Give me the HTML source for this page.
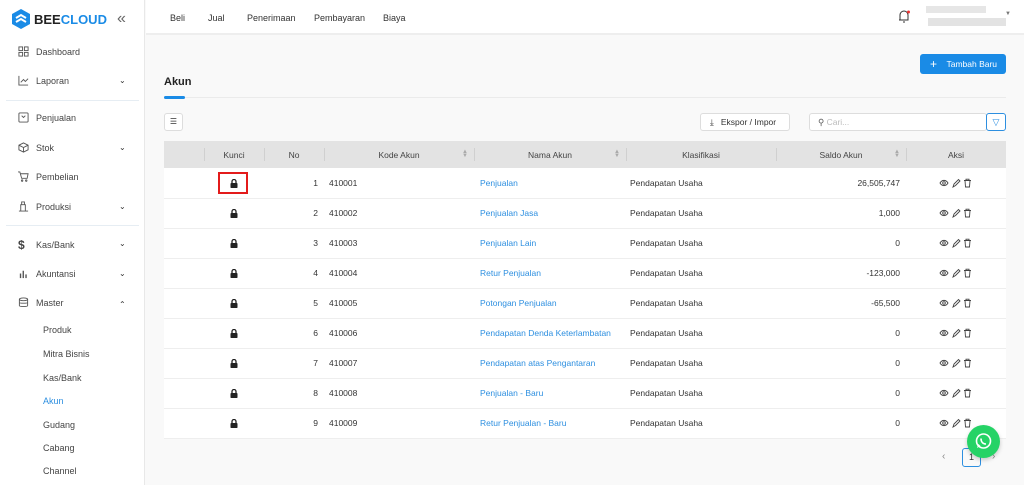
<!DOCTYPE html>
<html><head><meta charset="utf-8">
<style>
*{box-sizing:border-box;margin:0;padding:0}
body{width:1024px;height:485px;overflow:hidden;font-family:"Liberation Sans",sans-serif;font-size:9px;color:#333;background:#f9f9f9;position:relative}
.sb{position:absolute;left:0;top:0;width:145px;height:485px;background:#fff;border-right:1px solid #e8e8e8}
.logo{position:absolute;left:12px;top:9px;display:flex;align-items:center;font-weight:bold;font-size:13px;letter-spacing:0}
.mi{position:absolute;left:18px;display:flex;align-items:center;color:#444;font-size:9px}
.mi svg{width:11px;height:11px;margin-right:7px}
.chev{position:absolute;left:119px;font-size:8px;color:#333}
.sub{position:absolute;left:43px;color:#444;font-size:9px}
.hr{position:absolute;left:6px;width:133px;height:1px;background:#e6edf3}
.top{position:absolute;left:146px;top:0;width:878px;height:35px;background:#fff;border-bottom:2px solid #eee}
.top span{position:absolute;top:13px;font-size:9px;color:#333}
.btn{position:absolute;background:#fff;border:1px solid #ddd;border-radius:3px}
table{position:absolute;left:164px;top:141px;width:842px;border-collapse:collapse;background:#fff}
th{height:27px;background:#e3e3e3;font-weight:normal;font-size:8.5px;color:#444;position:relative}
td{height:30px;border-bottom:1px solid #eee;font-size:8.5px;color:#333}
th.s::before{content:"";position:absolute;left:0;top:7px;height:13px;width:1px;background:#d0d0d0}
.srt{position:absolute;right:6px;top:9px;color:#aaa;font-size:6px;line-height:4px}
a{color:#2d8fe0;text-decoration:none}
.ic{display:inline-block;vertical-align:middle}
</style></head><body>
<div class="sb">
 <div class="logo"><svg width="18" height="20" viewBox="0 0 18 20"><path d="M9 0L18 5V15L9 20L0 15V5Z" fill="#1a8be6"/><path d="M4 9L9 6L14 9M4 13L9 10L14 13" stroke="#fff" stroke-width="2" fill="none"/></svg><span style="margin-left:4px;color:#222">BEE</span><span style="color:#1a8be6">CLOUD</span><span style="margin-left:10px;color:#666;font-weight:normal;font-size:16px">«</span></div>
 <div class="mi" style="top:46px"><svg viewBox="0 0 12 12" fill="none" stroke="#555"><rect x="1" y="1" width="4" height="4"/><rect x="7" y="1" width="4" height="4"/><rect x="1" y="7" width="4" height="4"/><rect x="7" y="7" width="4" height="4"/></svg>Dashboard</div>
 <div class="mi" style="top:75px"><svg viewBox="0 0 12 12" fill="none" stroke="#555"><path d="M1 1V11H11M3 8L6 5L8 7L11 4"/></svg>Laporan</div><div class="chev" style="top:76px">&#8964;</div>
 <div class="hr" style="top:100px"></div>
 <div class="mi" style="top:112px"><svg viewBox="0 0 12 12" fill="none" stroke="#555"><rect x="1" y="1" width="10" height="10" rx="1"/><path d="M4 4L6 6L8 4"/></svg>Penjualan</div>
 <div class="mi" style="top:142px"><svg viewBox="0 0 12 12" fill="none" stroke="#555"><path d="M6 1L11 3.5V8.5L6 11L1 8.5V3.5ZM1 3.5L6 6L11 3.5M6 6V11"/></svg>Stok</div><div class="chev" style="top:143px">&#8964;</div>
 <div class="mi" style="top:171px"><svg viewBox="0 0 12 12" fill="none" stroke="#555"><path d="M0 1H2L4 8H10L11 3H3"/><circle cx="4.5" cy="10.5" r="0.8"/><circle cx="9" cy="10.5" r="0.8"/></svg>Pembelian</div>
 <div class="mi" style="top:201px"><svg viewBox="0 0 12 12" fill="none" stroke="#555"><path d="M1 11H11M3 11V4H8V11M4 4V1H7V4"/></svg>Produksi</div><div class="chev" style="top:202px">&#8964;</div>
 <div class="hr" style="top:225px"></div>
 <div class="mi" style="top:238px"><span style="width:11px;margin-right:7px;font-size:12px;font-weight:bold">$</span>Kas/Bank</div><div class="chev" style="top:239px">&#8964;</div>
 <div class="mi" style="top:268px"><svg viewBox="0 0 12 12" fill="#555"><rect x="2" y="6" width="1.5" height="5"/><rect x="5" y="3" width="1.5" height="8"/><rect x="8" y="7" width="1.5" height="4"/></svg>Akuntansi</div><div class="chev" style="top:269px">&#8964;</div>
 <div class="mi" style="top:297px"><svg viewBox="0 0 12 12" fill="none" stroke="#555"><ellipse cx="6" cy="2.5" rx="4.5" ry="1.5"/><path d="M1.5 2.5V9.5C1.5 10.5 10.5 10.5 10.5 9.5V2.5M1.5 6C1.5 7 10.5 7 10.5 6"/></svg>Master</div><div class="chev" style="top:300px">&#8963;</div>
 <div class="sub" style="top:325px">Produk</div>
 <div class="sub" style="top:349px">Mitra Bisnis</div>
 <div class="sub" style="top:373px">Kas/Bank</div>
 <div class="sub" style="top:396px;color:#2d8fe0">Akun</div>
 <div class="sub" style="top:420px">Gudang</div>
 <div class="sub" style="top:443px">Cabang</div>
 <div class="sub" style="top:466px">Channel</div>
</div>
<div class="top">
 <span style="left:24px">Beli</span><span style="left:62px">Jual</span><span style="left:101px">Penerimaan</span><span style="left:168px">Pembayaran</span><span style="left:237px">Biaya</span>
 <svg style="position:absolute;left:751px;top:9px" width="14" height="15" viewBox="0 0 14 15" fill="none" stroke="#333"><path d="M3 11V6A4 4 0 0 1 11 6V11H2M6 13H8"/><circle cx="11.5" cy="3" r="1.5" fill="#e33" stroke="none"/></svg>
 <div style="position:absolute;left:780px;top:6px;width:60px;height:7px;background:#e6e6e6"></div>
 <div style="position:absolute;left:782px;top:18px;width:78px;height:8px;background:#e3e3e3"></div>
 <span style="left:859px;top:11px;font-size:6px;color:#777">▼</span>
</div>
<div style="position:absolute;left:164px;top:76px;font-weight:bold;font-size:11px;color:#222">Akun</div>
<div style="position:absolute;left:164px;top:97px;width:842px;height:1px;background:#ebebeb"></div>
<div style="position:absolute;left:164px;top:96px;width:21px;height:3px;border-radius:2px;background:#1a8be6"></div>
<div style="position:absolute;left:920px;top:54px;width:86px;height:20px;background:#1a8be6;border-radius:3px;color:#fff;font-size:8.5px;line-height:20px;padding-left:10px"><span style="font-size:12px;vertical-align:-1px">+</span>&nbsp;&nbsp;&nbsp;&nbsp;Tambah Baru</div>
<div class="btn" style="left:164px;top:113px;width:19px;height:18px;text-align:center;line-height:16px;font-size:8px">☰</div>
<div class="btn" style="left:700px;top:113px;width:90px;height:18px;line-height:16px;padding-left:9px;font-size:8.5px">⤓&nbsp;&nbsp;&nbsp;Ekspor / Impor</div>
<div class="btn" style="left:809px;top:113px;width:178px;height:18px;line-height:16px;padding-left:8px;color:#bbb;font-size:8.5px"><span style="color:#555">&#9906;</span> Cari...</div>
<div class="btn" style="left:986px;top:113px;width:20px;height:18px;border-color:#2d8fe0;text-align:center;line-height:16px;color:#2d8fe0;font-size:9px">▽</div>
<table>
<tr><th style="width:40px"></th><th class="s" style="width:60px">Kunci</th><th class="s" style="width:60px">No</th><th class="s" style="width:150px">Kode Akun<span class="srt">▲<br>▼</span></th><th class="s" style="width:152px">Nama Akun<span class="srt">▲<br>▼</span></th><th class="s" style="width:150px">Klasifikasi</th><th class="s" style="width:130px">Saldo Akun<span class="srt">▲<br>▼</span></th><th class="s" style="width:100px">Aksi</th></tr>
</table>
<div id="rows"></div>
<div style="position:absolute;left:218px;top:172px;width:30px;height:22px;border:2px solid #e31b1b"></div>
<div style="position:absolute;left:942px;top:451px;color:#888;font-size:10px">‹</div>
<div style="position:absolute;left:962px;top:448px;width:19px;height:19px;border:1px solid #2d8fe0;border-radius:3px;text-align:center;line-height:17px;font-size:9px">1</div>
<div style="position:absolute;left:992px;top:451px;color:#888;font-size:10px">›</div>
<div style="position:absolute;left:967px;top:425px;width:33px;height:33px;border-radius:50%;background:#25d366;box-shadow:0 2px 4px rgba(0,0,0,.2)"><svg width="33" height="33" viewBox="0 0 33 33"><circle cx="16.5" cy="16" r="7" fill="none" stroke="#fff" stroke-width="1.6"/><path d="M10 23L11.5 19L13.5 21Z" fill="#fff"/><path d="M14 13.5C14 17 16 19 19 19" stroke="#fff" stroke-width="1.6" fill="none"/></svg></div>
<script>
var d=[["1","410001","Penjualan","26,505,747"],["2","410002","Penjualan Jasa","1,000"],["3","410003","Penjualan Lain","0"],["4","410004","Retur Penjualan","-123,000"],["5","410005","Potongan Penjualan","-65,500"],["6","410006","Pendapatan Denda Keterlambatan","0"],["7","410007","Pendapatan atas Pengantaran","0"],["8","410008","Penjualan - Baru","0"],["9","410009","Retur Penjualan - Baru","0"]];
var h='<table style="top:168px">';
var lock='<svg class="ic" width="8" height="9" viewBox="0 0 8 9"><path d="M2 4V2.5A2 2 0 0 1 6 2.5V4" stroke="#222" stroke-width="1.3" fill="none"/><rect x="0.5" y="4" width="7" height="5" rx="0.8" fill="#222"/></svg>';
var ac='<svg class="ic" width="34" height="10" viewBox="0 0 34 10" fill="none" stroke="#444" stroke-width="0.9"><path d="M1 5C3 1.5 7 1.5 9 5C7 8.5 3 8.5 1 5Z"/><circle cx="5" cy="5" r="1.3"/><path d="M14 9L15 6L19.5 1.5L21 3L16.5 7.5ZM14 9L16.5 7.5"/><path d="M25 2.5H32M27 2.5V1.2H30V2.5M26 2.5L26.5 9H30.5L31 2.5"/></svg>';
d.forEach(function(r){h+='<tr><td style="width:40px"></td><td style="width:60px;text-align:center">'+lock+'</td><td style="width:60px;text-align:right;padding-right:6px">'+r[0]+'</td><td style="width:150px;padding-left:5px">'+r[1]+'</td><td style="width:152px;padding-left:6px"><a>'+r[2]+'</a></td><td style="width:150px;padding-left:4px">Pendapatan Usaha</td><td style="width:130px;text-align:right;padding-right:6px">'+r[3]+'</td><td style="width:100px;text-align:center">'+ac+'</td></tr>';});
document.getElementById('rows').innerHTML=h+'</table>';
</script>
</body></html>
